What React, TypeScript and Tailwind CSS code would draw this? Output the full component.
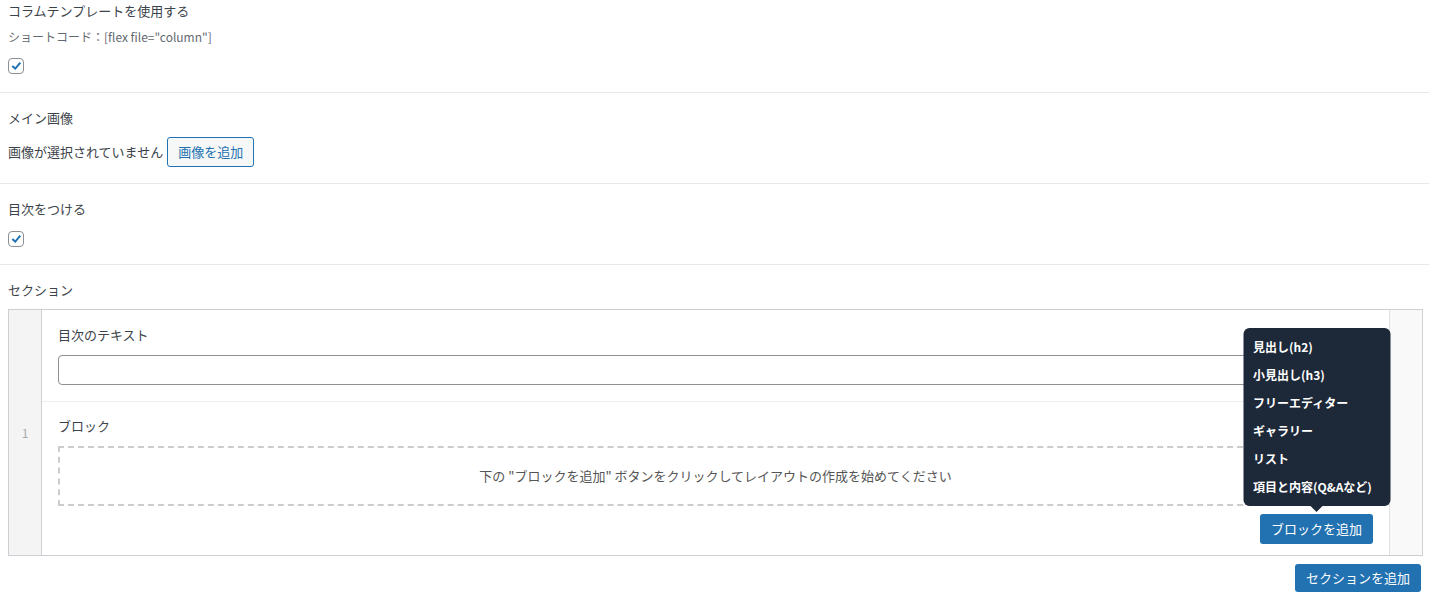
import React from 'react';

const font = { fontFamily: '"Noto Sans CJK JP", "Noto Sans", sans-serif' };

function Check() {
  return (
    <span className="relative inline-flex h-4 w-4 items-center justify-center rounded-[4px] border border-[#8c8f94] bg-white">
      <svg viewBox="0 0 16 16" className="absolute left-[1px] top-[1px] h-[13px] w-[13px]">
        <path d="M2 8.2l1.8-1.7 2.6 2.5L11.7 2.6l1.9 1.5-7 8.3z" fill="#2271b1" />
      </svg>
    </span>
  );
}

const menuItems = ['見出し(h2)', '小見出し(h3)', 'フリーエディター', 'ギャラリー', 'リスト', '項目と内容(Q&Aなど)'];

export default function App() {
  return (
    <div className="min-h-screen w-[1429px] overflow-hidden bg-white text-[13px] text-[#3c434a]" style={font}>
      {/* column template */}
      <div className="border-b border-[#e8e8e8] px-2 pt-[1px] pb-[18px]">
        <div className="leading-5">コラムテンプレートを使用する</div>
        <div className="mt-[6px] text-[12px] leading-5 text-[#646970]">ショートコード：[flex file="column"]</div>
        <div className="mt-[11px] flex">
          <Check />
        </div>
      </div>

      {/* main image */}
      <div className="border-b border-[#e8e8e8] px-2 pt-[15px] pb-4">
        <div className="leading-5">メイン画像</div>
        <div className="mt-[9px] flex items-center gap-1">
          <span className="leading-5">画像が選択されていません</span>
          <button className="h-[30px] w-[87px] rounded-[3px] border border-[#2271b1] bg-[#f6f7f7] text-[13px] text-[#2271b1]">画像を追加</button>
        </div>
      </div>

      {/* toc */}
      <div className="border-b border-[#e8e8e8] px-2 pt-[15px] pb-[17px]">
        <div className="leading-5">目次をつける</div>
        <div className="mt-[12px] flex">
          <Check />
        </div>
      </div>

      {/* sections */}
      <div className="pt-[15px] pl-2 pr-[6px]">
        <div className="leading-5">セクション</div>
        <div className="mt-[9px] flex border border-[#ccd0d4]">
          <div className="flex w-[33px] shrink-0 items-center justify-center border-r border-[#ccd0d4] bg-[#f4f4f4] text-[12px] text-[#aaa]">1</div>
          <div className="min-w-0 flex-1">
            <div className="border-b border-[#eee] px-4 pt-[15px] pb-4">
              <div className="leading-5">目次のテキスト</div>
              <div className="mt-[10px] h-[30px] rounded-[4px] border border-[#8c8f94] bg-white" />
            </div>
            <div className="px-4 pt-[14px] pb-[11px]">
              <div className="leading-5">ブロック</div>
              <div className="mt-[10px] flex h-[60px] items-center justify-center border-2 border-dashed border-[#ccc] text-[#555]">
                下の "ブロックを追加" ボタンをクリックしてレイアウトの作成を始めてください
              </div>
              <div className="mt-[8px] flex justify-end">
                <div className="relative">
                  <div className="absolute bottom-[38px] left-1/2 z-10 w-[147px] -translate-x-1/2 rounded-[6px] bg-[#1d2838] px-[10px] py-[5px] text-[12px] font-semibold text-white">
                    {menuItems.map((m) => (
                      <div key={m} className="h-[28px] leading-[28px] whitespace-nowrap">{m}</div>
                    ))}
                    <div className="absolute -bottom-[6px] left-1/2 h-0 w-0 -translate-x-1/2 border-x-[6px] border-t-[6px] border-x-transparent border-t-[#1d2838]" />
                  </div>
                  <button className="h-[30px] w-[113px] rounded-[3px] bg-[#2271b1] text-[13px] text-white">ブロックを追加</button>
                </div>
              </div>
            </div>
          </div>
          <div className="w-[33px] shrink-0 border-l border-[#e1e1e1] bg-[#f9f9f9]" />
        </div>
        <div className="mt-[8px] flex justify-end pr-[2px]">
          <button className="h-[28px] w-[126px] rounded-[3px] bg-[#2271b1] text-[13px] text-white">セクションを追加</button>
        </div>
      </div>
    </div>
  );
}
